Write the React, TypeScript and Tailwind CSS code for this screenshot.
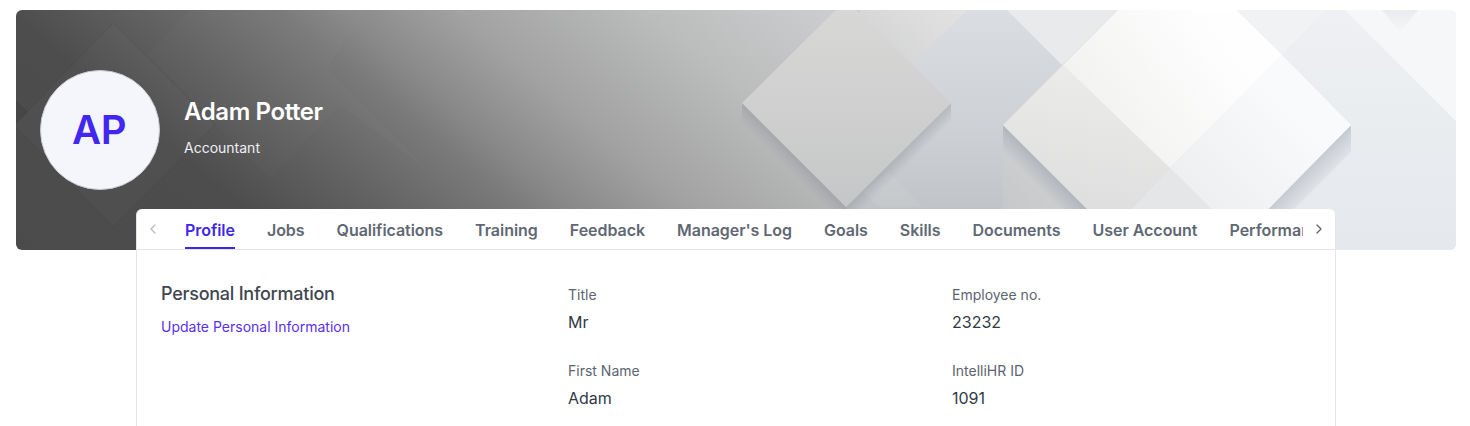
import { ChevronLeft, ChevronRight } from "lucide-react";

const tabs = ["Profile", "Jobs", "Qualifications", "Training", "Feedback", "Manager's Log", "Goals", "Skills", "Documents", "User Account", "Performance"];

const fields: { label: string; value: string }[] = [
  { label: "Title", value: "Mr" },
  { label: "Employee no.", value: "23232" },
  { label: "First Name", value: "Adam" },
  { label: "IntelliHR ID", value: "1091" },
];

function BannerArt() {
  return (
    <svg className="absolute inset-0 h-full w-full" viewBox="16 10 1440 240" preserveAspectRatio="none">
      <defs>
        <linearGradient id="midFill" x1="0" y1="0" x2="0" y2="1">
          <stop offset="0" stopColor="#d8d8d7" />
          <stop offset="0.55" stopColor="#cecfce" />
          <stop offset="1" stopColor="#c5c6c7" />
        </linearGradient>
        <linearGradient id="litFill" x1="0.8" y1="0.2" x2="0.1" y2="0.7">
          <stop offset="0.2" stopColor="#fdfefd" />
          <stop offset="1" stopColor="#f2f2f1" />
        </linearGradient>
        <linearGradient id="leftFill" x1="0.6" y1="0" x2="0.4" y2="1">
          <stop offset="0" stopColor="#ececeb" />
          <stop offset="1" stopColor="#dddcdc" />
        </linearGradient>
        <linearGradient id="rightFill" x1="1" y1="0" x2="0" y2="1">
          <stop offset="0.3" stopColor="#f9fafb" />
          <stop offset="1" stopColor="#e9ebed" />
        </linearGradient>
        <linearGradient id="blueFill" x1="0" y1="0" x2="0" y2="1">
          <stop offset="0" stopColor="#dadde1" />
          <stop offset="0.5" stopColor="#cdd0d4" />
          <stop offset="1" stopColor="#babdc1" />
        </linearGradient>
        <linearGradient id="creamFill" x1="1" y1="0" x2="0" y2="0.6">
          <stop offset="0" stopColor="#e2e3e1" stopOpacity="1" />
          <stop offset="1" stopColor="#d6d7d6" stopOpacity="0.6" />
        </linearGradient>
        <linearGradient id="sideFill" x1="0" y1="0" x2="0" y2="1">
          <stop offset="0" stopColor="#eef0f3" />
          <stop offset="1" stopColor="#e5e8ec" />
        </linearGradient>
        <linearGradient id="notch" x1="0" y1="0" x2="0" y2="1">
          <stop offset="0" stopColor="#e9ebee" />
          <stop offset="1" stopColor="#f5f6f8" />
        </linearGradient>
        {/* edge shadows fall away at right angles to each lower side */}
        <linearGradient id="midShadeL" gradientUnits="userSpaceOnUse" x1="794" y1="155" x2="784" y2="165">
          <stop offset="0" stopColor="#868c95" stopOpacity="0.38" />
          <stop offset="1" stopColor="#868c95" stopOpacity="0" />
        </linearGradient>
        <linearGradient id="midShadeR" gradientUnits="userSpaceOnUse" x1="898" y1="155" x2="908" y2="165">
          <stop offset="0" stopColor="#868c95" stopOpacity="0.38" />
          <stop offset="1" stopColor="#868c95" stopOpacity="0" />
        </linearGradient>
        <linearGradient id="bigShadeL" gradientUnits="userSpaceOnUse" x1="1090" y1="212" x2="1076" y2="226">
          <stop offset="0" stopColor="#9aa1ab" stopOpacity="0.55" />
          <stop offset="1" stopColor="#9aa1ab" stopOpacity="0" />
        </linearGradient>
        <linearGradient id="bigShadeR" gradientUnits="userSpaceOnUse" x1="1264" y1="212" x2="1282" y2="230">
          <stop offset="0" stopColor="#a2a9b5" stopOpacity="0.5" />
          <stop offset="1" stopColor="#a2a9b5" stopOpacity="0" />
        </linearGradient>
      </defs>

      {/* dark diamonds on the left */}
      <path d="M16 100 L28 112 L16 124 Z" fill="#000" fillOpacity="0.08" />
      <path d="M190 10 L147 55 L270 178 L340 105 L430 172 L327 68 L365 10 Z" fill="#fff" fillOpacity="0.014" />
      <path d="M113 23 L215 125 L113 227 L14 125 Z" fill="#fff" fillOpacity="0.018" stroke="#000" strokeOpacity="0.06" />

      {/* panels behind the two front diamonds */}
      <path d="M967 10 L1008 10 L1062 65 L1003 125 L1003 250 L846 250 L846 130 Z" fill="url(#blueFill)" />
      <path d="M860 10 L967 10 L905 72 L860 30 Z" fill="url(#creamFill)" />
      <path d="M1007 10 L1117 10 L1062 65 Z" fill="#e9eaeb" />
      <path d="M888 172 L923 207 L878 207 L863 192 Z" fill="#fff" fillOpacity="0.07" />
      <path d="M1237 10 L1325 10 L1282 55 Z" fill="#f1f2f4" />
      <path d="M1325 10 L1345 10 L1456 121 L1456 250 L1200 250 L1351 125 L1282 55 Z" fill="url(#sideFill)" />
      <path d="M1345 10 L1456 10 L1456 121 Z" fill="#f6f7f9" />
      <path d="M1382 10 L1418 10 L1400 32 Z" fill="url(#notch)" />

      {/* centre diamond */}
      <path d="M742 103 L846 207 L846 226 L742 122 Z" fill="url(#midShadeL)" />
      <path d="M951 103 L846 207 L846 226 L951 122 Z" fill="url(#midShadeR)" />
      <path d="M846 0 L951 103 L846 207 L742 103 Z" fill="url(#midFill)" />

      {/* big diamond, built from its lit faces */}
      <path d="M1003 125 L1177 299 L1177 327 L1003 152 Z" fill="url(#bigShadeL)" />
      <path d="M1351 125 L1177 299 L1177 327 L1351 152 Z" fill="url(#bigShadeR)" />
      <path d="M1063 65 L1003 125 L1110 232 L1170 168 Z" fill="url(#leftFill)" />
      <path d="M1170 168 L1110 232 L1177 299 L1240 238 Z" fill="#e5e6e7" />
      <path d="M1282 55 L1351 125 L1240 238 L1170 168 Z" fill="url(#rightFill)" />
      <path d="M1177 -49 L1282 55 L1170 168 L1063 65 Z" fill="url(#litFill)" />
    </svg>
  );
}

export default function App() {
  return (
    <div className="flex h-[426px] flex-col overflow-hidden bg-white pt-2.5 pr-3.5 pl-4 font-['Inter',sans-serif]">
      <div className="relative h-60 shrink-0 overflow-hidden rounded-md bg-[linear-gradient(40deg,#4b4b4b_0%,#4d4d4d_16%,#626262_24%,#7a7a7a_32%,#888888_35%,#a2a2a2_42%,#bbbcbc_53%,#d6d7d9_70%,#e6e8eb_85%,#f5f6f8_100%)]">
        <BannerArt />
        <div className="relative flex h-[180px] items-end gap-6 pl-6">
          <div className="flex size-[120px] items-center justify-center rounded-full border border-[#c9cad0] bg-[#f5f6fc] pr-0.5 text-[40px] font-semibold tracking-[-0.5px] text-[#4127f0]">
            AP
          </div>
          <div className="flex h-[120px] flex-col pt-[26px] text-white">
            <h1 className="text-2xl leading-8 font-semibold tracking-[-0.4px]">Adam Potter</h1>
            <p className="mt-2 text-sm leading-6 text-[#eef0f3]">Accountant</p>
          </div>
        </div>
      </div>

      <div className="relative mx-auto -mt-[41px] w-[1200px] flex-1 rounded-t-md border-x border-[#e3e5ea] bg-white">
        <div className="flex h-[41px] items-center border-b border-[#e3e5ea]">
          <div className="flex w-12 shrink-0 pl-2">
            <ChevronLeft size={16} className="text-[#b5bbc4]" />
          </div>
          <nav className="flex h-full min-w-0 flex-1 gap-8 overflow-hidden">
            {tabs.map((tab, i) => (
              <a
                key={tab}
                className={`flex h-full shrink-0 items-center border-b-2 pt-1 text-base font-semibold tracking-[-0.04px] ${
                  i === 0 ? "border-[#3d26f0] text-[#3d26f0]" : "border-transparent text-[#5f6873]"
                }`}
              >
                {tab}
              </a>
            ))}
          </nav>
          <div className="flex w-8 shrink-0 justify-center">
            <ChevronRight size={16} className="text-[#5f6873]" />
          </div>
        </div>

        <div className="flex pt-[30px] pl-6">
          <div className="w-[407px] shrink-0">
            <h2 className="text-lg leading-7 font-medium tracking-[-0.25px] text-[#3f4650]">Personal Information</h2>
            <a className="mt-[7px] block text-sm leading-6 text-[#5a2ff0]">Update Personal Information</a>
          </div>
          <dl className="grid shrink-0 grid-cols-[384px_384px] gap-y-[25px] pt-[3px]">
            {fields.map((field) => (
              <div key={field.label}>
                <dt className="text-sm leading-6 text-[#5b6470]">{field.label}</dt>
                <dd className="mt-[3px] text-base leading-6 text-[#2f3a45]">{field.value}</dd>
              </div>
            ))}
          </dl>
        </div>
      </div>
    </div>
  );
}
